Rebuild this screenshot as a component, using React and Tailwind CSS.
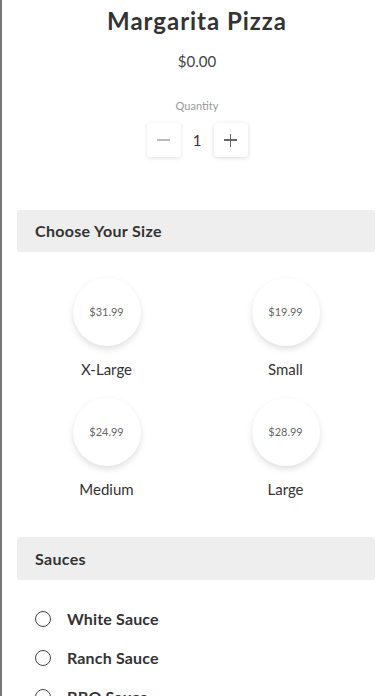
import React from "react";

const font = { fontFamily: '"Lato", "Liberation Sans", sans-serif' };

function SizeOption({ price, label }) {
  return (
    <div className="flex flex-col items-center">
      <div className="w-[68px] h-[68px] rounded-full bg-white shadow-[0_3px_6px_rgba(0,0,0,0.13)] flex items-center justify-center text-[11px] text-[#666]">
        {price}
      </div>
      <div className="mt-[12px] h-[22px] leading-[22px] text-[15px] text-[#333]">{label}</div>
    </div>
  );
}

function Radio({ label }) {
  return (
    <div className="flex items-center h-[39px]">
      <div className="w-[16px] h-[16px] rounded-full border-[1.5px] border-[#444] ml-[33px]" />
      <div className="ml-[16px] text-[16px] font-bold text-[#333] tracking-[0.01em]">{label}</div>
    </div>
  );
}

export default function App() {
  return (
    <div className="w-[392px] h-[696px] overflow-hidden bg-white border-l-2 border-[#777] relative" style={font}>
      <div className="flex flex-col items-center">
        <div className="mt-[5px] h-[32px] leading-[32px] text-[24px] font-bold text-[#333] tracking-[0.04em]">Margarita Pizza</div>
        <div className="mt-[13px] h-[22px] leading-[22px] text-[15px] text-[#444]">$0.00</div>
        <div className="mt-[27px] h-[14px] leading-[14px] text-[11px] text-[#999]">Quantity</div>
        <div className="mt-[10px] flex items-center">
          <div className="w-[34px] h-[34px] bg-white rounded-[3px] shadow-[0_1px_4px_rgba(0,0,0,0.12)] flex items-center justify-center">
            <div className="w-[13px] h-[1.5px] bg-[#bbb]" />
          </div>
          <div className="w-[33px] text-center text-[15px] text-[#333]">1</div>
          <div className="w-[34px] h-[34px] bg-white rounded-[3px] shadow-[0_1px_4px_rgba(0,0,0,0.15)] flex items-center justify-center relative">
            <div className="w-[13px] h-[1.5px] bg-[#666]" />
            <div className="absolute w-[1.5px] h-[13px] bg-[#666]" />
          </div>
        </div>
      </div>

      <div className="ml-[15px] mr-[17px] mt-[53px] h-[42px] bg-[#eeeeee] rounded-[2px] flex items-center px-[18px] text-[16px] font-bold text-[#333] tracking-[0.02em]">
        Choose Your Size
      </div>

      <div className="ml-[15px] mr-[17px] mt-[26px] grid grid-cols-2 gap-y-[18px]">
        <SizeOption price="$31.99" label="X-Large" />
        <SizeOption price="$19.99" label="Small" />
        <SizeOption price="$24.99" label="Medium" />
        <SizeOption price="$28.99" label="Large" />
      </div>

      <div className="ml-[15px] mr-[17px] mt-[37px] h-[43px] bg-[#eeeeee] rounded-[2px] flex items-center px-[18px] text-[16px] font-bold text-[#333] tracking-[0.02em]">
        Sauces
      </div>

      <div className="mt-[19px]">
        <Radio label="White Sauce" />
        <Radio label="Ranch Sauce" />
        <Radio label="BBQ Sauce" />
      </div>
    </div>
  );
}
